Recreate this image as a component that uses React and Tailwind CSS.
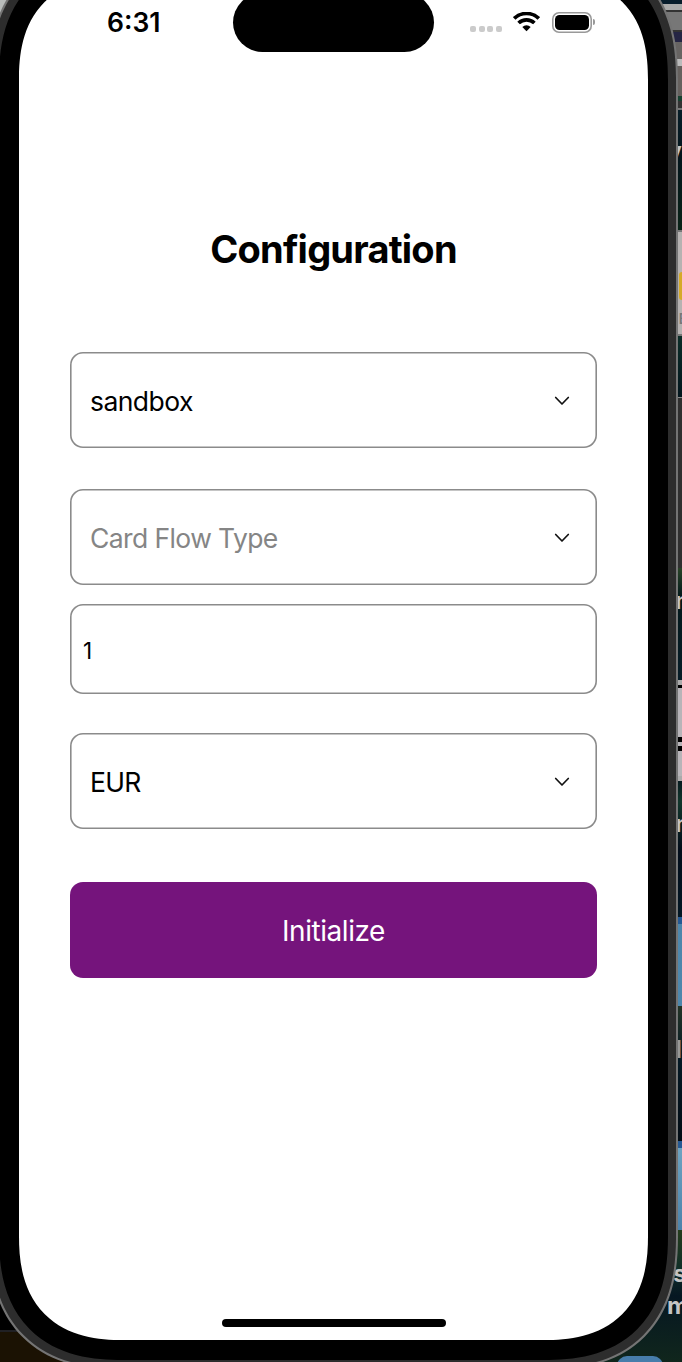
import React from "react";

function Chevron() {
  return (
    <svg className="mr-[27.5px] h-[10px] w-[16px]" viewBox="0 0 16 10" fill="none" stroke="#111" strokeWidth="1.7" strokeLinecap="round" strokeLinejoin="round">
      <path d="M1.7 1.5 L8 8 L14.3 1.5" />
    </svg>
  );
}

function Select({ children, className }) {
  return (
    <div className={"flex h-[96px] items-center justify-between rounded-[13px] pt-[2px] pl-[20px] text-[26.5px] shadow-[inset_0_0_0_1.6px_#8b8b8b] " + className}>
      {children}
      <Chevron />
    </div>
  );
}

function Wifi() {
  return (
    <svg className="ml-[11px] h-[20px] w-[27px]" viewBox="0 0 27 20">
      <g fill="none" stroke="#000" strokeWidth="3.7">
        <path d="M1.2 6.5 A17.6 17.6 0 0 1 25.8 6.5" />
        <path d="M5.6 11 A11.3 11.3 0 0 1 21.4 11" />
      </g>
      <path d="M9.3 15 A6.2 6.2 0 0 1 17.7 15 L13.5 19.3 Z" />
    </svg>
  );
}

function StatusBar() {
  return (
    <div className="flex h-[76px] items-start">
      <div className="w-[214px] pt-[30px] pl-[88px] text-[26.5px] leading-[32px] font-semibold">6:31</div>
      <div className="h-[59px] w-[201px] translate-y-[17px] rounded-full bg-black" />
      <div className="flex items-center pt-[35.5px] pl-[36px]">
        <div className="flex gap-[2.6px] pt-[14px]">
          {[0, 1, 2, 3].map((i) => (
            <span key={i} className="size-[6px] rounded-[2px] bg-[#cbcbcb]" />
          ))}
        </div>
        <Wifi />
        <div className="ml-[12px] h-[21px] w-[40px] rounded-[7px] p-[3px] shadow-[inset_0_0_0_1.6px_#999]">
          <div className="h-full rounded-[4.5px] bg-black" />
        </div>
        <div className="ml-[1.5px] h-[6px] w-[2px] rounded-r-full bg-[#999]" />
      </div>
    </div>
  );
}

function Desktop() {
  return (
    <div className="flex h-full justify-between bg-[#071820]">
      <div className="flex w-[120px] flex-col justify-between bg-black">
        <div className="h-[60px] bg-[#b9bcbb]" />
        <div className="h-[32px] border-t-2 border-[#202024] bg-[#1b1203]" />
      </div>
      <div className="flex w-[90px] flex-col font-['Inter',sans-serif] text-[24px] leading-[32px] font-semibold text-[#c4c4c4]">
        <div className="h-[4px] bg-[#071c2b]" />
        <div className="h-[6px] bg-[#aaa]" />
        <div className="h-[22px] border-y-2 border-[#333] bg-[#777]" />
        <div className="h-[10px] bg-[#252544]" />
        <div className="h-[17px] bg-[#676462]" />
        <div className="h-[7px] bg-[#bbb]" />
        <div className="h-[30px] bg-[#66615e]" />
        <div className="h-[5px] bg-[#164130]" />
        <div className="h-[9px] border-b-2 border-[#777] bg-[#333]" />
        <div className="h-[120px] bg-[linear-gradient(#061d28,#03151c_40%,#092317)] pt-[30px] text-right">V</div>
        <div className="h-[106px] border-y-2 border-[#777] bg-[#b5b2b1] pt-[40px]">
          <div className="ml-auto h-[28px] w-[3px] rounded-l-full bg-[#d5aa28]" />
          <div className="mt-[10px] -mr-[6px] text-right text-[14px] leading-[18px] text-[#777]">B</div>
        </div>
        <div className="h-[62px] border-b border-[#888] bg-[linear-gradient(#0b2d28,#02151d)]" />
        <div className="h-[170px] bg-[#303030]" />
        <div className="h-[112px] bg-[linear-gradient(#294327,#03191b_25%,#061c27)] pt-[15px]">
          <div className="-mr-[8px] pt-[2px] text-right">n</div>
        </div>
        <div className="h-[101px] border-y-[5px] border-[#aaa] bg-[#b7b4b8]">
          <div className="h-[3px] bg-black" />
          <div className="mt-[49px] h-[5px] bg-black" />
          <div className="mt-[4px] h-[5px] bg-black" />
        </div>
        <div className="h-[136px] bg-[linear-gradient(#061b20,#11362b_15%,#020d1a_50%,#031724)] pt-[27px]">
          <div className="-mr-[8px] text-right">n</div>
        </div>
        <div className="h-[89px] border-t-[7px] border-[#255994] bg-[linear-gradient(90deg,#5d96ba,#4d86ab)]" />
        <div className="h-[135px] bg-[linear-gradient(#233426,#041925_40%,#020c14)] pt-[28px] text-right text-[#999]">l</div>
        <div className="h-[89px] border-t-[7px] border-[#255994] bg-[linear-gradient(#6da3c1,#4b82aa)]" />
        <div className="h-[132px] overflow-hidden bg-[linear-gradient(#253c1c,#102e28_30%,#061722_50%,#10261c)] pt-[28px] text-[24px] font-bold">
          <div className="pl-[81px]">s</div>
          <div className="w-[120px] pl-[75px]">m</div>
          <div className="mt-[34px] ml-[25px] h-[12px] w-[46px] rounded-t-[10px] bg-[#477dab]" />
        </div>
      </div>
    </div>
  );
}

export default function App() {
  return (
    <div className="relative h-[1362px] w-[682px] overflow-hidden">
      <Desktop />
      <div className="absolute -top-[54px] -left-[11px] h-[1424px] w-[689px] rounded-[134px] border-2 border-[#747474] bg-[#2d2d2d] p-[8px] font-['Inter',sans-serif] text-black [corner-shape:superellipse(1.28)]">
        <div className="h-full rounded-[124px] bg-black p-[20px] [corner-shape:superellipse(1.28)]">
          <div className="flex h-full flex-col overflow-hidden rounded-[104px] bg-white [corner-shape:superellipse(1.28)]">
            <StatusBar />
            <div className="flex flex-col px-[51px]">
              <h1 className="mt-[173px] text-center text-[38px] leading-[48px] font-bold tracking-[-0.78px]">Configuration</h1>
              <Select className="mt-[79.4px] tracking-[-0.55px]">sandbox</Select>
              <Select className="mt-[41px] tracking-[-0.6px] text-[#858585]">Card Flow Type</Select>
              <div className="mt-[19px] flex h-[90px] items-center rounded-[13px] pt-[2px] pl-[13px] text-[22.5px] shadow-[inset_0_0_0_1.6px_#8b8b8b]">1</div>
              <Select className="mt-[39px] tracking-[-0.7px]">EUR</Select>
              <button className="mt-[53px] h-[96px] rounded-[13px] bg-[#75147c] pt-[2px] text-[28px] tracking-[-0.45px] text-white">Initialize</button>
            </div>
            <div className="mx-auto mt-auto mb-[13px] h-[8px] w-[224px] rounded-full bg-black" />
          </div>
        </div>
      </div>
    </div>
  );
}
